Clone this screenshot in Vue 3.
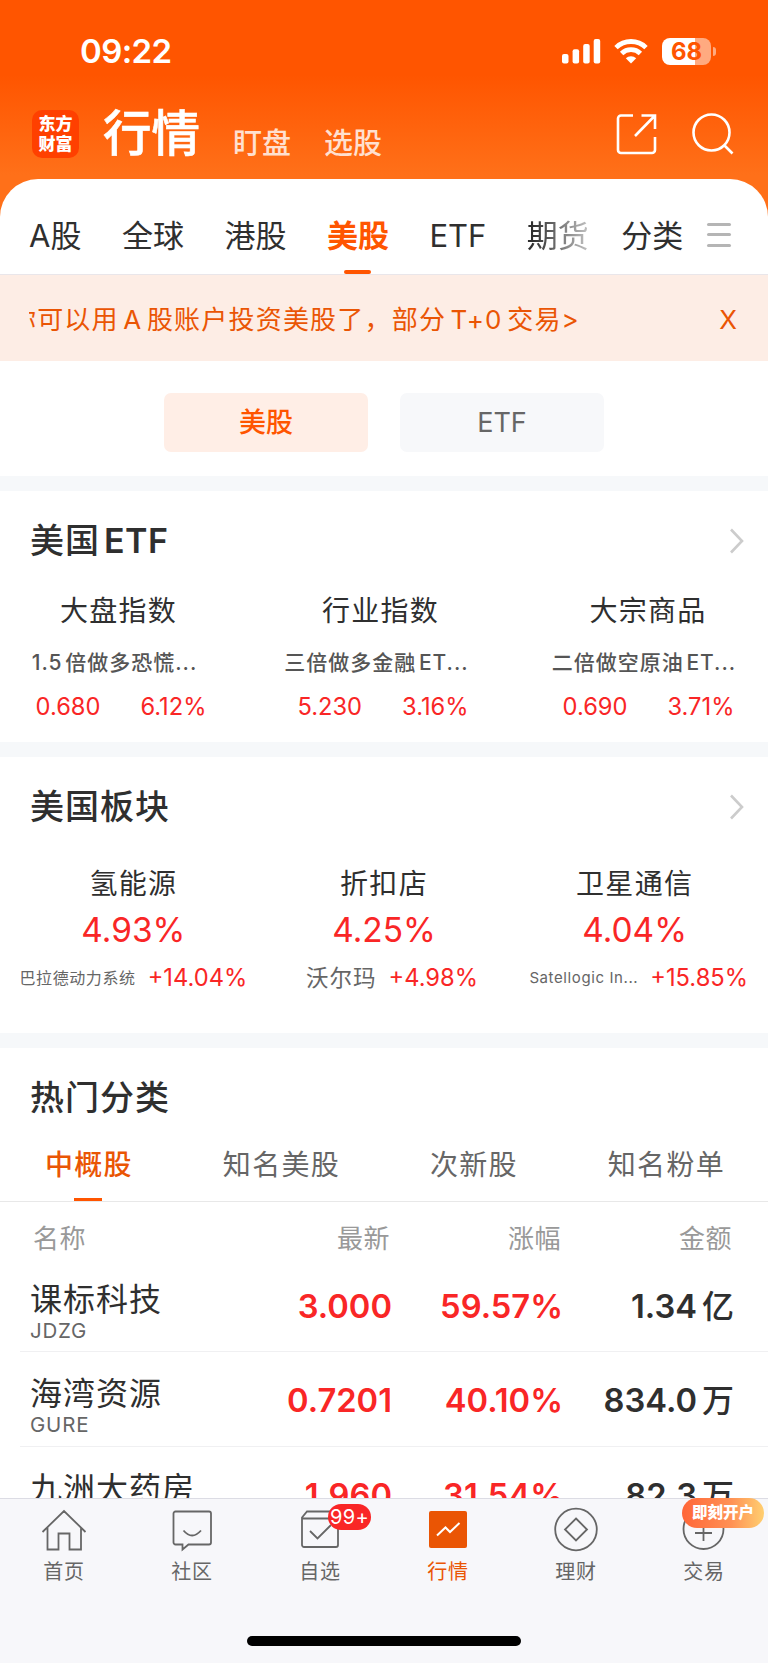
<script setup>
import { ref } from 'vue';

const marketTabs = ['A股', '全球', '港股', '美股', 'ETF', '期货'];
const activeMarket = ref('美股');

const kinds = ['美股', 'ETF'];
const activeKind = ref('美股');

const showNotice = ref(true);

const etfs = [
  { title: '大盘指数', name: '1.5 倍做多恐慌...', price: '0.680', change: '6.12%' },
  { title: '行业指数', name: '三倍做多金融 ET...', price: '5.230', change: '3.16%' },
  { title: '大宗商品', name: '二倍做空原油 ET...', price: '0.690', change: '3.71%' },
];

const sectors = [
  { title: '氢能源', change: '4.93%', stock: '巴拉德动力系统', stockChange: '+14.04%', size: 'small' },
  { title: '折扣店', change: '4.25%', stock: '沃尔玛', stockChange: '+4.98%', size: 'normal' },
  { title: '卫星通信', change: '4.04%', stock: 'Satellogic In...', stockChange: '+15.85%', size: 'latin' },
];

const categories = ['中概股', '知名美股', '次新股', '知名粉单'];
const activeCategory = ref('中概股');

const stocks = [
  { name: '课标科技', code: 'JDZG', price: '3.000', change: '59.57%', amount: '1.34', unit: '亿' },
  { name: '海湾资源', code: 'GURE', price: '0.7201', change: '40.10%', amount: '834.0', unit: '万' },
  { name: '九洲大药房', code: '', price: '1.960', change: '31.54%', amount: '82.3', unit: '万' },
];
</script>

<template>
  <div class="screen">
    <header class="header">
      <div class="status-bar">
        <span class="time">09:22</span>
        <div class="status-icons">
          <svg class="signal" width="39" height="25" viewBox="0 0 39 25" fill="#fff">
            <rect x="0" y="15" width="6.5" height="9.5" rx="2" />
            <rect x="10.6" y="10.3" width="6.5" height="14.2" rx="2" />
            <rect x="21.2" y="5" width="6.5" height="19.5" rx="2" />
            <rect x="31.7" y="0" width="6.5" height="24.5" rx="2" />
          </svg>
          <svg class="wifi" width="34" height="25" viewBox="0 0 34 25" fill="none" stroke="#fff">
            <path d="M2 8.6A21.5 21.5 0 0 1 32 8.6" stroke-width="4.8" />
            <path d="M7.6 14.4A13.6 13.6 0 0 1 26.4 14.4" stroke-width="4.8" />
            <path d="M17 24.6L11.8 19.3A7.4 7.4 0 0 1 22.2 19.3Z" fill="#fff" stroke="none" />
          </svg>
          <div class="battery"><span>68</span></div>
          <i class="battery-tip"></i>
        </div>
      </div>
      <div class="nav">
        <div class="logo">东方<br />财富</div>
        <h1>行情</h1>
        <span class="nav-link">盯盘</span>
        <span class="nav-link">选股</span>
        <svg class="share" width="42" height="42" viewBox="0 0 42 42" fill="none" stroke="#fff" stroke-width="2.6">
          <path d="M17 2.5H5A3 3 0 0 0 2 5.500V37A3 3 0 0 0 5 40H36A3 3 0 0 0 39 37V24" />
          <path d="M25.500 2.500H39V16M39 2.500L19 23" />
        </svg>
        <svg class="search" width="42" height="42" viewBox="0 0 42 42" fill="none" stroke="#fff" stroke-width="2.6">
          <circle cx="19.500" cy="19.500" r="18" />
          <path d="M32 32L40.500 40.500" />
        </svg>
      </div>
    </header>

    <main class="sheet">
      <nav class="market-tabs">
        <span
          v-for="tab in marketTabs"
          :key="tab"
          class="market-tab"
          :class="{ active: tab === activeMarket, fading: tab === '期货' }"
          @click="activeMarket = tab"
        >{{ tab }}</span>
        <span class="market-tab all">分类</span>
        <div class="menu"><i></i><i></i><i></i></div>
      </nav>

      <div v-if="showNotice" class="notice">
        <div class="notice-text"><span>你可以用 A 股账户投资美股了，部分 T+0 交易&gt;</span></div>
        <span class="notice-close" @click="showNotice = false">X</span>
      </div>

      <div class="kinds">
        <button
          v-for="kind in kinds"
          :key="kind"
          :class="{ active: kind === activeKind }"
          @click="activeKind = kind"
        >{{ kind }}</button>
      </div>

      <section class="etf">
        <div class="section-title">
          <h2>美国 <b>ETF</b></h2>
          <svg width="16" height="26" viewBox="0 0 16 26" fill="none" stroke="#ccc" stroke-width="2.6">
            <path d="M2 1.500L13 13L2 24.500" />
          </svg>
        </div>
        <div class="etf-grid">
          <div v-for="item in etfs" :key="item.title" class="etf-card">
            <div class="card-title">{{ item.title }}</div>
            <div class="etf-name">{{ item.name }}</div>
            <div class="etf-numbers">
              <span>{{ item.price }}</span>
              <span>{{ item.change }}</span>
            </div>
          </div>
        </div>
      </section>

      <section class="sector">
        <div class="section-title">
          <h2>美国板块</h2>
          <svg width="16" height="26" viewBox="0 0 16 26" fill="none" stroke="#ccc" stroke-width="2.6">
            <path d="M2 1.500L13 13L2 24.500" />
          </svg>
        </div>
        <div class="sector-grid">
          <div v-for="item in sectors" :key="item.title" class="sector-card">
            <div class="card-title">{{ item.title }}</div>
            <div class="sector-change">{{ item.change }}</div>
            <div class="sector-stock">
              <span class="stock-name" :class="item.size">{{ item.stock }}</span>
              <span class="stock-change">{{ item.stockChange }}</span>
            </div>
          </div>
        </div>
      </section>

      <section class="hot">
        <div class="section-title"><h2>热门分类</h2></div>
        <div class="categories">
          <span
            v-for="item in categories"
            :key="item"
            :class="{ active: item === activeCategory }"
            @click="activeCategory = item"
          >{{ item }}</span>
        </div>
        <div class="table-head">
          <span>名称</span><span>最新</span><span>涨幅</span><span>金额</span>
        </div>
        <div v-for="stock in stocks" :key="stock.name" class="stock-row">
          <div>
            <div class="name">{{ stock.name }}</div>
            <div class="code">{{ stock.code }}</div>
          </div>
          <span class="value up">{{ stock.price }}</span>
          <span class="value up">{{ stock.change }}</span>
          <span class="value">{{ stock.amount }}<em>{{ stock.unit }}</em></span>
        </div>
      </section>
    </main>

    <footer class="tab-bar">
      <div class="tab-items">
        <div class="tab-item">
          <svg width="46" height="46" viewBox="0 0 46 46">
            <path d="M1.500 26L23 5L44.500 26M6.500 21.500V43.500H17.500V27.500H28.500V43.500H40V21.500" />
          </svg>
          <span>首页</span>
        </div>
        <div class="tab-item">
          <svg width="46" height="46" viewBox="0 0 46 46">
            <path d="M6.500 5.500H40A2 2 0 0 1 42 7.500V36.500A2 2 0 0 1 40 38.500H19.500L13.500 43.500V38.500H6.500A2 2 0 0 1 4.500 36.500V7.500A2 2 0 0 1 6.500 5.500Z" />
            <path d="M14.500 24.500Q23 34.500 32 24.500" />
          </svg>
          <span>社区</span>
        </div>
        <div class="tab-item">
          <svg width="46" height="46" viewBox="0 0 46 46">
            <path d="M5 11.500L10 5.500H36L41 11.500V39A2 2 0 0 1 39 41H7A2 2 0 0 1 5 39ZM5 12.500H41" />
            <path d="M13 25L20.500 32.500L34 19" />
          </svg>
          <span>自选</span>
          <b class="badge">99+</b>
        </div>
        <div class="tab-item active">
          <svg width="46" height="46" viewBox="0 0 46 46">
            <rect x="4" y="5" width="38" height="37" rx="2" fill="#ea5504" stroke="none" />
            <path class="trend" d="M12 29.500L20.500 21.500L25 26L34.500 17" />
          </svg>
          <span>行情</span>
        </div>
        <div class="tab-item">
          <svg width="46" height="46" viewBox="0 0 46 46">
            <circle cx="23" cy="23.500" r="20.800" />
            <path d="M23 12.500L34 23.500L23 34.500L12 23.500Z" />
          </svg>
          <span>理财</span>
        </div>
        <div class="tab-item">
          <svg width="46" height="46" viewBox="0 0 46 46">
            <circle cx="22.500" cy="23" r="20" />
            <path d="M22.500 15V35M14 27H31" />
          </svg>
          <span>交易</span>
          <b class="promo">即刻开户</b>
        </div>
      </div>
      <div class="home-indicator"></div>
    </footer>
  </div>
</template>

<style>
body {
  margin: 0;
}
</style>

<style scoped>
.screen {
  width: 768px;
  height: 1663px;
  display: flex;
  flex-direction: column;
  overflow: hidden;
  background: #fff;
  color: #2f2f2f;
  font-family: Inter, "Noto Sans CJK SC", sans-serif;
  white-space: nowrap;
}
.header {
  flex: none;
  height: 225px;
  background: linear-gradient(#ff5500 75px, #ff7019 175px);
  color: #fff;
}
.status-bar {
  display: flex;
  justify-content: space-between;
  height: 102px;
  align-items: center;
  padding: 0 52px 0 80px;
}
.time {
  font-size: 33px;
  font-weight: 600;
  letter-spacing: -0.6px;
}
.status-icons {
  display: flex;
  align-items: center;
}
.wifi {
  margin: 0 14px 0 13px;
}
.battery {
  width: 49px;
  height: 27px;
  border-radius: 8px;
  background: linear-gradient(90deg, #fff 68%, #ffaa80 68%);
  color: #ff5500;
  font-size: 24px;
  font-weight: 700;
  line-height: 27px;
  text-align: center;
}
.battery-tip {
  width: 3px;
  height: 9px;
  margin-left: 2px;
  border-radius: 0 4px 4px 0;
  background: #ffaa80;
}
.nav {
  display: flex;
  align-items: center;
  height: 64px;
  padding: 0 34px 0 32px;
}
.logo {
  width: 47px;
  height: 48px;
  box-sizing: border-box;
  padding-top: 4px;
  border-radius: 10px;
  background: #ff4000;
  font-size: 17px;
  font-weight: 900;
  line-height: 20px;
  text-align: center;
}
h1 {
  margin: 0 33px 0 24px;
  font-size: 48.5px;
  font-weight: 500;
  -webkit-text-stroke: 0.6px #fff;
  line-height: 64px;
}
.nav-link {
  margin-right: 33px;
  padding-top: 20px;
  color: #ffe0d0;
  font-size: 29px;
  font-weight: 500;
  line-height: 44px;
}
.share {
  margin-left: auto;
  margin-right: 34px;
}
.sheet {
  flex: 1;
  min-height: 0;
  margin-top: -46px;
  overflow: hidden;
  border-radius: 38px 38px 0 0;
  background: #fff;
}
.market-tabs {
  display: flex;
  gap: 40.5px;
  height: 95.5px;
  box-sizing: border-box;
  padding: 0 35px 0 29px;
  border-bottom: 1px solid #e9e6ea;
}
.market-tab {
  position: relative;
  padding-top: 18px;
  font-size: 31px;
  line-height: 77px;
}
.market-tab.active {
  color: #ff5500;
  font-weight: 700;
}
.market-tab.active::after {
  content: "";
  position: absolute;
  bottom: 0;
  left: 50%;
  width: 27px;
  height: 4px;
  margin-left: -13.5px;
  border-radius: 2px;
  background: #ff5500;
}
.market-tab.fading {
  background: linear-gradient(90deg, #2f2f2f 10%, #c4c4c4);
  background-clip: text;
  color: transparent;
}
.market-tab.all {
  margin-left: -8px;
}
.menu {
  display: flex;
  flex-direction: column;
  gap: 7.5px;
  margin: 43.5px 0 0 -17px;
}
.menu i {
  width: 24px;
  height: 3px;
  border-radius: 2px;
  background: #b5b5b5;
}
.notice {
  display: flex;
  justify-content: space-between;
  height: 86.5px;
  box-sizing: border-box;
  padding: 3px 31px 0 29px;
  background: #fdede5;
  color: #ea5504;
  font-size: 26px;
  line-height: 84px;
}
.notice-text {
  display: flex;
  justify-content: flex-end;
  width: 551px;
  overflow: hidden;
  letter-spacing: 1.2px;
  word-spacing: -4px;
}
.kinds {
  display: flex;
  justify-content: center;
  gap: 32px;
  height: 83px;
  padding-top: 32px;
}
.kinds button {
  width: 204px;
  height: 59px;
  padding: 0;
  border: none;
  border-radius: 7px;
  background: #f7f8fa;
  color: #666;
  font-family: inherit;
  font-size: 27px;
  line-height: 60px;
}
.kinds button.active {
  background: #ffeee6;
  color: #ff5500;
  font-weight: 500;
}
section {
  border-top: 15px solid #f6f8fa;
}
.section-title {
  display: flex;
  align-items: center;
  justify-content: space-between;
  height: 100px;
  padding: 0 23px 0 30px;
}
h2 {
  margin: 0;
  font-size: 34px;
  font-weight: 500;
  letter-spacing: 1px;
  word-spacing: -6px;
  line-height: 100px;
}
h2 b {
  font-weight: 600;
  letter-spacing: 0.4px;
}
.card-title {
  font-size: 28px;
  letter-spacing: 1.3px;
  line-height: 40px;
}
.etf {
  height: 251px;
}
.etf-grid {
  display: grid;
  grid-template-columns: 237px 287px 248px;
  text-align: center;
}
.etf-name {
  padding-right: 8px;
  color: #555;
  font-size: 21px;
  font-weight: 500;
  letter-spacing: 1px;
  word-spacing: -4px;
  line-height: 63px;
}
.etf-numbers {
  display: flex;
  justify-content: center;
  gap: 40px;
  padding-left: 5px;
  color: #f92626;
  font-size: 23.7px;
  line-height: 26px;
}
.etf-card:nth-child(3) .etf-numbers {
  padding-left: 1px;
}
.sector {
  height: 276px;
}
.sector-grid {
  display: grid;
  grid-template-columns: repeat(3, 1fr);
  padding: 0 8px;
  text-align: center;
}
.sector-grid .card-title {
  padding-top: 1px;
  line-height: 52px;
}
.sector-change {
  color: #f92626;
  font-size: 33.4px;
  line-height: 40px;
}
.sector-stock {
  display: flex;
  justify-content: center;
  gap: 12px;
  line-height: 56px;
}
.sector-card:nth-child(2) .sector-stock {
  padding-left: 16px;
}
.sector-card:nth-child(3) .sector-stock {
  padding-left: 8px;
}
.stock-name {
  color: #666;
  font-size: 22.5px;
  letter-spacing: 1px;
}
.stock-name.small {
  font-size: 16px;
  letter-spacing: 0.6px;
}
.stock-name.latin {
  font-size: 15px;
  letter-spacing: 0.6px;
}
.stock-change {
  color: #f92626;
  font-size: 23.7px;
}
.categories {
  display: flex;
  justify-content: space-between;
  height: 54px;
  box-sizing: border-box;
  padding: 0 43px 0 45px;
  border-bottom: 1px solid #e8e8e8;
  color: #666;
  font-size: 28px;
  letter-spacing: 1.3px;
  line-height: 34px;
}
.categories .active {
  position: relative;
  color: #ea5504;
  font-weight: 500;
}
.categories .active::after {
  content: "";
  position: absolute;
  bottom: 0;
  left: 50%;
  width: 28px;
  height: 3px;
  margin-left: -15px;
  background: #ff5500;
}
.table-head {
  display: grid;
  grid-template-columns: 187px 170px 171px 171px;
  height: 37px;
  padding: 19px 0 0 33px;
  color: #999;
  font-size: 26px;
  letter-spacing: 0.5px;
  line-height: 36px;
}
.table-head span:not(:first-child),
.value {
  text-align: right;
}
.stock-row {
  display: grid;
  grid-template-columns: 191px 171px 171px 171px;
  height: 94.4px;
  box-sizing: border-box;
  margin-left: 20px;
  padding: 24px 0 0 10px;
  border-bottom: 1px solid #f0f0f2;
}
.name {
  font-size: 32px;
  letter-spacing: 1px;
  line-height: 36px;
}
.code {
  color: #666;
  font-size: 20.5px;
  line-height: 26px;
  letter-spacing: 0.8px;
}
.value {
  font-size: 32.7px;
  font-weight: 600;
  line-height: 48px;
}
.value em {
  margin-left: 5px;
  font-size: 32px;
  font-style: normal;
  font-weight: 500;
}
.up {
  color: #f92626;
}
.tab-bar {
  position: relative;
  flex: none;
  height: 165px;
  box-sizing: border-box;
  border-top: 1px solid #dcdce4;
  background: #f7f7fa;
}
.tab-items {
  display: flex;
  height: 137px;
}
.tab-item {
  position: relative;
  flex: 1;
  display: flex;
  flex-direction: column;
  align-items: center;
  padding-top: 7px;
  color: #666;
  font-size: 20px;
  letter-spacing: 0.8px;
  line-height: 40px;
}
.tab-item svg {
  flex: none;
  fill: none;
  stroke: #666;
  stroke-width: 1.8;
}
.tab-item .trend {
  stroke: #fff;
  stroke-width: 2;
}
.tab-item.active {
  color: #ea5504;
}
.badge {
  position: absolute;
  top: 5px;
  left: 72px;
  width: 43px;
  height: 26px;
  border-radius: 13px;
  background: #f92626;
  color: #fff;
  font-size: 20px;
  font-weight: 400;
  letter-spacing: 0.3px;
  line-height: 27px;
  text-align: center;
}
.promo {
  position: absolute;
  top: -1px;
  left: 42px;
  width: 82px;
  height: 30px;
  border-radius: 15px;
  background: linear-gradient(90deg, #ff6638, #ff9155 60%, #ffcf70);
  color: #fff;
  font-size: 15.5px;
  font-weight: 900;
  letter-spacing: 0;
  line-height: 30px;
  text-align: center;
}
.home-indicator {
  width: 274px;
  height: 10px;
  margin: 0 auto;
  border-radius: 5px;
  background: #000;
}
</style>
